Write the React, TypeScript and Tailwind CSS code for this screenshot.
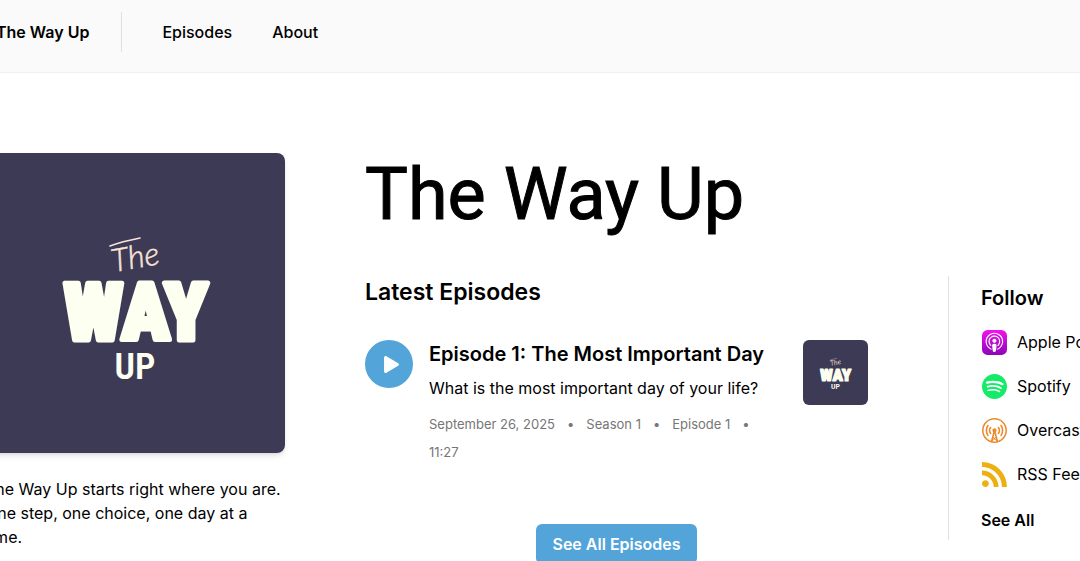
import { FaPlay } from 'react-icons/fa'
import { SiApplepodcasts, SiOvercast, SiRss, SiSpotify } from 'react-icons/si'

const navLinks = ['Episodes', 'About']

const platforms = [
    {
        name: 'Apple Podcasts',
        icon: (
            <>
                <svg width="0" height="0" className="absolute">
                    <linearGradient id="podcasts" x1="0" y1="0" x2="0" y2="1">
                        <stop offset="0" stopColor="#f014ee" />
                        <stop offset="1" stopColor="#8c05b8" />
                    </linearGradient>
                </svg>
                <SiApplepodcasts size={25} fill="url(#podcasts)" />
            </>
        ),
    },
    { name: 'Spotify', icon: <SiSpotify size={25} className="text-[#14ec69]" /> },
    { name: 'Overcast', icon: <SiOvercast size={25} className="text-[#eb8a2c]" /> },
    { name: 'RSS Feed', icon: <SiRss size={25} className="text-[#edb010]" /> },
]

function Cover({ className }: { className: string }) {
    return (
        <svg viewBox="0 0 300 300" className={className} role="img" aria-label="The Way Up cover art">
            <rect width="300" height="300" fill="#3d3a56" />
            <g textAnchor="middle">
                <text
                    x="152"
                    y="115"
                    transform="rotate(-10 152 115)"
                    className="fill-[#fbe3d6] stroke-[#fbe3d6] stroke-[0.5px] font-['Lato'] text-[32px] font-light italic"
                >
                    The
                </text>
                <path d="M125 93c8-3 20-6 30-8" fill="none" stroke="#fbe3d6" strokeWidth="1.6" strokeLinecap="round" />
                <text
                    x="151"
                    y="187"
                    strokeLinejoin="round"
                    className="fill-[#fdfff0] stroke-[#fdfff0] stroke-[5px] font-['Roboto_Condensed',sans-serif] text-[80px] font-black"
                >
                    WAY
                </text>
                <text
                    x="150"
                    y="226"
                    className="fill-[#fdfff0] font-['Roboto_Condensed',sans-serif] text-[36px] font-semibold"
                >
                    UP
                </text>
            </g>
        </svg>
    )
}

export default function App() {
    return (
        <div className="h-screen overflow-hidden bg-white font-['Inter',sans-serif] text-base text-black">
            <header className="border-b border-[#f0f0f0] bg-[#fafafa] pt-3 pb-5">
                <nav className="-ml-1 flex h-10 items-center">
                    <a href="#" className="font-semibold">The Way Up</a>
                    <div className="ml-8 flex h-10 items-center gap-10 border-l border-[#e0e0e0] pl-10 font-medium">
                        {navLinks.map((link) => (
                            <a key={link} href="#">{link}</a>
                        ))}
                    </div>
                </nav>
            </header>

            <div className="-mr-16 -ml-[15px] flex gap-20 pt-20">
                <aside className="w-[300px] shrink-0">
                    <Cover className="size-[300px] rounded-lg shadow-md" />
                    <p className="mt-6">
                        The Way Up starts right where you are. One step, one choice, one day at a time.
                    </p>
                </aside>

                <main className="min-w-0 flex-1">
                    <h1 className="font-['Roboto',sans-serif] text-[72px] leading-[83px] font-normal [-webkit-text-stroke:1px_black]">
                        The Way Up
                    </h1>

                    <div className="mt-10 flex gap-20">
                        <section className="min-w-0 flex-1">
                            <h2 className="text-[23px] leading-8 font-semibold">Latest Episodes</h2>

                            <article className="mt-8 flex items-start">
                                <button
                                    type="button"
                                    aria-label="Play"
                                    className="flex size-12 shrink-0 items-center justify-center rounded-full bg-[#52a4d9] pl-1 text-white"
                                >
                                    <FaPlay size={17} />
                                </button>
                                <div className="mr-8 ml-4 min-w-0 flex-1">
                                    <h3 className="text-xl leading-7 font-semibold">
                                        <a href="#">Episode 1: The Most Important Day</a>
                                    </h3>
                                    <p className="mt-2">What is the most important day of your life?</p>
                                    <div className="mt-[10px] flex flex-wrap text-[13px] leading-7 text-[#767676]">
                                        <span>September 26, 2025</span>
                                        <span className="mx-3">•</span>
                                        <span>Season 1</span>
                                        <span className="mx-3">•</span>
                                        <span>Episode 1</span>
                                        <span className="mx-3">•</span>
                                        <span>11:27</span>
                                    </div>
                                </div>
                                <Cover className="size-[65px] shrink-0 rounded-md" />
                            </article>

                            <div className="mt-[58px] flex justify-center">
                                <button type="button" className="rounded-md bg-[#52a4d9] px-4 py-2 font-semibold text-white">
                                    See All Episodes
                                </button>
                            </div>
                        </section>

                        <section className="h-[264px] w-[196px] shrink-0 border-l border-[#e0e0e0] pt-2 pl-8">
                            <h2 className="text-xl leading-7 font-semibold">Follow</h2>
                            <ul className="mt-2">
                                {platforms.map((platform) => (
                                    <li key={platform.name}>
                                        <a href="#" className="flex h-11 items-center gap-[10px] pl-px whitespace-nowrap">
                                            {platform.icon}
                                            {platform.name}
                                        </a>
                                    </li>
                                ))}
                            </ul>
                            <a href="#" className="mt-3 block font-semibold">See All</a>
                        </section>
                    </div>
                </main>
            </div>
        </div>
    )
}
